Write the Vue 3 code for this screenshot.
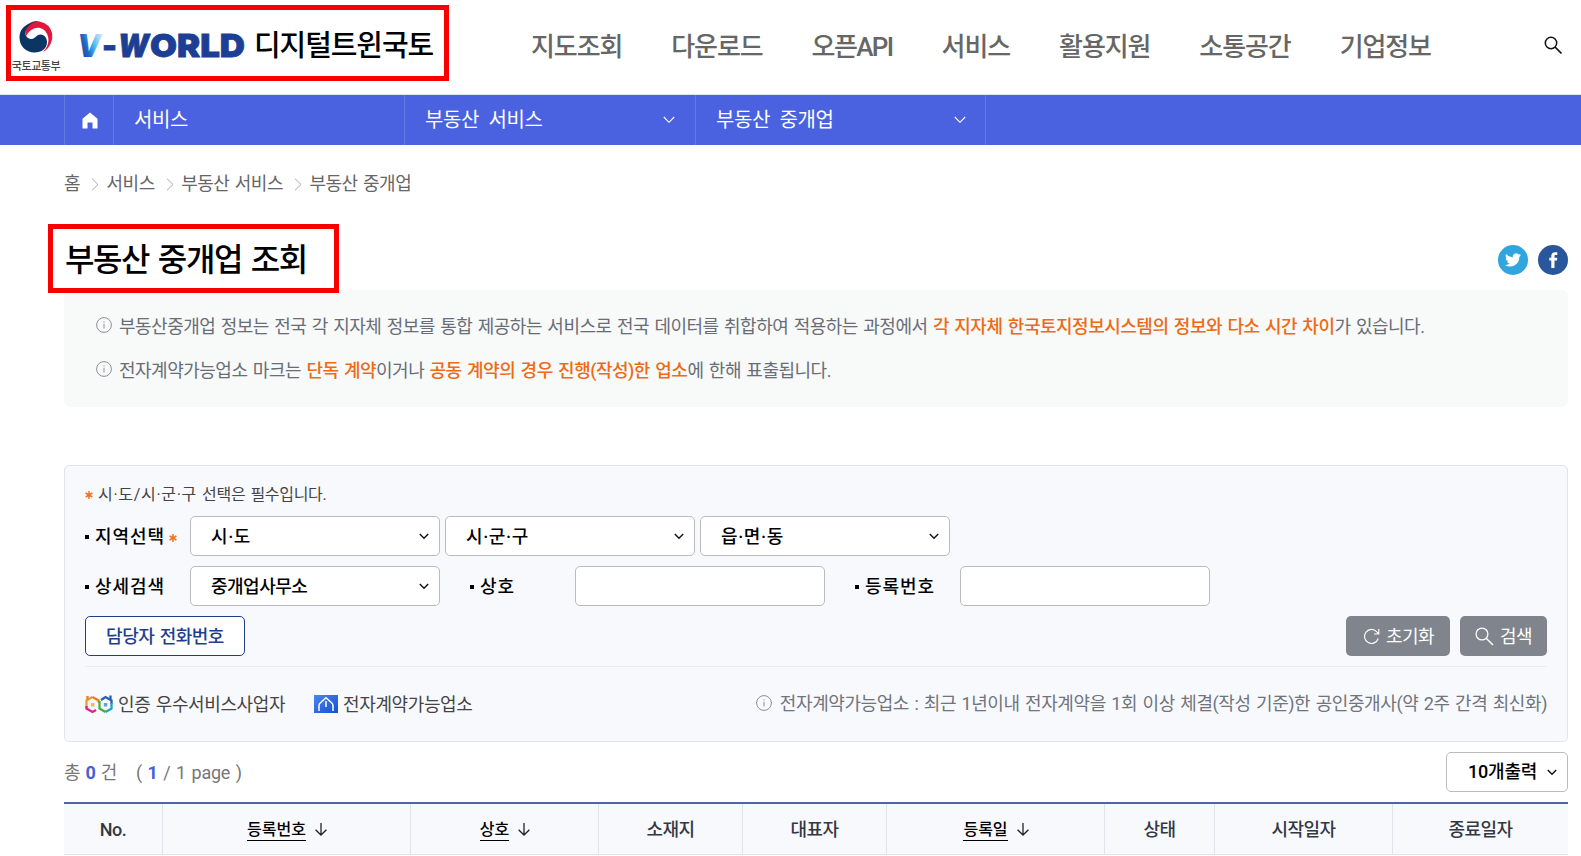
<template>
  <div class="page">
    <header class="header">
      <a class="logo">
        <span class="ministry">
          <svg width="34" height="34" viewBox="0 0 34 34">
            <path d="M6 7A15.5 15.5 0 0 1 33 13C34.500 21 30 29 24 32C29.500 26 30.500 20 28.500 15C26 8.500 20 6.500 15 8.500C11.500 10 9.500 12 7 16Z" fill="#e3173e" />
            <path d="M11 3.500C4 6 .5 11 .5 17.500C.5 26 7 32.500 15.500 32.500C22.500 32.500 28 28.500 28 22C28 17.500 25 14.500 21.500 14.500C17 14.500 16.500 19 12.500 19C9 19 6.500 16.500 6.500 13C6.500 8 10 5 14 3C16 2 19 1.500 21 1.500C17 .4 14 2 11 3.500Z" fill="#0b3563" />
          </svg>
          <em>국토교통부</em>
        </span>
        <svg class="wordmark" width="176" height="44" viewBox="0 0 176 44">
          <defs>
            <linearGradient id="vfill" x1="0" y1="0.7" x2="1" y2="0.2">
              <stop offset="0" stop-color="#1c3f95" />
              <stop offset="0.35" stop-color="#2166c6" />
              <stop offset="0.6" stop-color="#45bdf5" />
              <stop offset="0.8" stop-color="#a9d5fa" />
              <stop offset="1" stop-color="#eadcf5" />
            </linearGradient>
          </defs>
          <text class="wm slant v" x="3" y="32" textLength="24" lengthAdjust="spacingAndGlyphs">V</text>
          <text class="wm" x="28" y="32" textLength="15" lengthAdjust="spacingAndGlyphs">-</text>
          <text class="wm slant" x="44" y="32" textLength="31" lengthAdjust="spacingAndGlyphs">W</text>
          <text class="wm" x="76" y="32" textLength="95" lengthAdjust="spacingAndGlyphs">ORLD</text>
        </svg>
        <strong>디지털트윈국토</strong>
      </a>
      <nav class="gnb">
        <a v-for="item in gnb" :key="item">{{ item }}</a>
      </nav>
      <svg class="search" width="19" height="19" viewBox="0 0 19 19">
        <circle cx="7" cy="7" r="5.700" fill="none" stroke="#111" stroke-width="1.500" />
        <path d="M11 11L17.500 17.500" stroke="#111" stroke-width="1.700" />
      </svg>
      <i class="mark mark-logo"></i>
    </header>

    <div class="lnb">
      <a class="home">
        <svg width="16" height="17" viewBox="0 0 16 17">
          <path d="M8 .5L15.500 6.700V16.500H10.500V10.500H5.500V16.500H.5V6.700Z" fill="#fff" />
        </svg>
      </a>
      <a v-for="item in lnb" :key="item.label" class="depth">
        {{ item.label }}
        <svg v-if="item.open" width="12" height="8" viewBox="0 0 12 8">
          <path d="M.8 1L6 6.300L11.200 1" fill="none" stroke="#fff" stroke-width="1.100" />
        </svg>
      </a>
    </div>

    <main class="content">
      <div class="crumbs">
        <template v-for="(c, i) in crumbs" :key="c">
          <svg v-if="i" width="8" height="13" viewBox="0 0 8 13">
            <path d="M1 .7L7 6.500L1 12.300" fill="none" stroke="#aaa" stroke-width="1" />
          </svg>
          <span>{{ c }}</span>
        </template>
      </div>

      <div class="title-row">
        <h1>부동산 중개업 조회</h1>
        <div class="sns">
          <a class="tw">
            <svg width="16" height="14" viewBox="0 0 24 20">
              <path d="M24 2.400a9.800 9.800 0 0 1-2.800.8A4.900 4.900 0 0 0 23.300.5a9.900 9.900 0 0 1-3.100 1.200 4.900 4.900 0 0 0-8.400 4.500A14 14 0 0 1 1.700 1.100a4.900 4.900 0 0 0 1.500 6.500 4.900 4.900 0 0 1-2.200-.6v.1a4.900 4.900 0 0 0 3.900 4.800 5 5 0 0 1-2.200.1 4.900 4.900 0 0 0 4.600 3.400A9.900 9.900 0 0 1 0 17.500 14 14 0 0 0 21.500 5c1-.7 1.800-1.600 2.500-2.600z" fill="#fff" />
            </svg>
          </a>
          <a class="fb">
            <svg width="9" height="16" viewBox="0 0 9 16">
              <path d="M2.300 16V8.600H.3V5.800H2.300V4C2.300 1.500 3.600.2 6 .2H8.300V3H6.700C5.800 3 5.500 3.400 5.500 4.200V5.800H8.300L8 8.600H5.500V16Z" fill="#fff" />
            </svg>
          </a>
        </div>
        <i class="mark mark-title"></i>
      </div>

      <div class="notice">
        <p>
          <svg class="info" width="16" height="16" viewBox="0 0 16 16"><circle cx="8" cy="8" r="7.400" /><path d="M8 6.800V11.500M8 4.300V5.500" /></svg>
          <span>부동산중개업 정보는 전국 각 지자체 정보를 통합 제공하는 서비스로 전국 데이터를 취합하여 적용하는 과정에서 <b>각 지자체 한국토지정보시스템의 정보와 다소 시간 차이</b>가 있습니다.</span>
        </p>
        <p>
          <svg class="info" width="16" height="16" viewBox="0 0 16 16"><circle cx="8" cy="8" r="7.400" /><path d="M8 6.800V11.500M8 4.300V5.500" /></svg>
          <span>전자계약가능업소 마크는 <b>단독 계약</b>이거나 <b>공동 계약의 경우 진행(작성)한 업소</b>에 한해 표출됩니다.</span>
        </p>
      </div>

      <form class="filter" @submit.prevent>
        <p class="required">
          <svg class="star" width="8" height="8" viewBox="0 0 8 8"><path d="M4 0V8M.6 2L7.400 6M7.400 2L.6 6" /></svg>
          <span><span class="dotted">시·도/시·군·구</span> 선택은 필수입니다.</span>
        </p>
        <div class="row">
          <label class="first">
            지역선택
            <svg class="star" width="8" height="8" viewBox="0 0 8 8"><path d="M4 0V8M.6 2L7.400 6M7.400 2L.6 6" /></svg>
          </label>
          <span v-for="r in regions" :key="r" class="select region">
            <select><option>{{ r }}</option></select>
            <svg width="10" height="7" viewBox="0 0 10 7"><path d="M.8 1L5 5.300L9.200 1" /></svg>
          </span>
        </div>
        <div class="row">
          <label class="first">상세검색</label>
          <span class="select">
            <select><option>중개업사무소</option></select>
            <svg width="10" height="7" viewBox="0 0 10 7"><path d="M.8 1L5 5.300L9.200 1" /></svg>
          </span>
          <label class="next">상호</label>
          <input v-model="name" type="text" />
          <label class="next">등록번호</label>
          <input v-model="regNo" type="text" />
        </div>
        <div class="buttons">
          <button class="phone">담당자 전화번호</button>
          <button class="gray reset" @click="reset">
            <svg width="17" height="17" viewBox="0 0 17 17">
              <path d="M15.200 10.500A7 7 0 1 1 13.800 3.800L15.800 5.800M15.800 1V6H11" fill="none" stroke="#fff" stroke-width="1.100" />
            </svg>
            초기화
          </button>
          <button class="gray find">
            <svg width="19" height="19" viewBox="0 0 19 19">
              <circle cx="7" cy="7" r="5.900" fill="none" stroke="#fff" stroke-width="1.300" />
              <path d="M11.200 11.200L18 18" stroke="#fff" stroke-width="1.400" />
            </svg>
            검색
          </button>
        </div>
        <div class="legend">
          <svg width="28" height="19" viewBox="0 0 28 19" fill="none" stroke-width="2.300">
            <path d="M7.500 2L1.500 5.500V13" stroke="#f59a23" />
            <path d="M1.500 11V13.500L7.500 17L11 15" stroke="#e0218a" />
            <path d="M7.500 2L13.500 5.500V7.500M2.500 1V4.500" stroke="#f07c1f" />
            <path d="M20.500 17L14.500 13.500V6" stroke="#4caf3a" />
            <path d="M16 5L20.500 2L26.500 5.500V9M25.500 .5V4" stroke="#2b5fb4" />
            <path d="M26.500 8V13.500L20.500 17" stroke="#23a4c8" />
            <path d="M6 8H9.500V11.500H6Z" fill="#f7b65a" stroke="none" />
            <path d="M18.800 8H22.300V11.500H18.800Z" fill="#58a5dc" stroke="none" />
          </svg>
          <span class="cert">인증 우수서비스사업자</span>
          <svg width="24" height="18" viewBox="0 0 24 18">
            <defs>
              <linearGradient id="econ" x1="0" y1="0" x2="1" y2="1">
                <stop offset="0" stop-color="#4c86ec" />
                <stop offset="1" stop-color="#1551d0" />
              </linearGradient>
            </defs>
            <rect width="24" height="18" fill="url(#econ)" />
            <path d="M5 16V10.500Q5 9 6.500 7.700L12 2.800L17.500 7.700Q19 9 19 10.500V16M12 6V12" fill="none" stroke="#fff" stroke-width="1.500" />
          </svg>
          <span class="econtract">전자계약가능업소</span>
          <span class="guide">
            <svg class="info" width="16" height="16" viewBox="0 0 16 16"><circle cx="8" cy="8" r="7.400" /><path d="M8 6.800V11.500M8 4.300V5.500" /></svg>
            <span>전자계약가능업소 : 최근 1년이내 전자계약을 1회 이상 체결(작성 기준)한 공인중개사(약 2주 간격 최신화)</span>
          </span>
        </div>
      </form>

      <div class="result-bar">
        <p>총 <b>0</b> 건 <span class="pages">( <b>1</b> / 1 page )</span></p>
        <span class="select small">
          <select><option>10개출력</option></select>
          <svg width="10" height="7" viewBox="0 0 10 7"><path d="M.8 1L5 5.300L9.200 1" /></svg>
        </span>
      </div>

      <table class="list">
        <colgroup>
          <col v-for="c in columns" :key="c.label" :style="{ width: c.width + 'px' }" />
        </colgroup>
        <thead>
          <tr>
            <th v-for="c in columns" :key="c.label">
              <a v-if="c.sort">
                <u>{{ c.label }}</u>
                <svg width="12" height="13" viewBox="0 0 12 13"><path d="M6 0V12M.6 6.800L6 12L11.400 6.800" /></svg>
              </a>
              <template v-else>{{ c.label }}</template>
            </th>
          </tr>
        </thead>
      </table>
    </main>
  </div>
</template>

<script setup>
import { ref } from 'vue'

const gnb = ['지도조회', '다운로드', '오픈API', '서비스', '활용지원', '소통공간', '기업정보']
const lnb = [
  { label: '서비스', open: false },
  { label: '부동산 서비스', open: true },
  { label: '부동산 중개업', open: true },
]
const crumbs = ['홈', '서비스', '부동산 서비스', '부동산 중개업']
const regions = ['시·도', '시·군·구', '읍·면·동']
const columns = [
  { label: 'No.', width: 99 },
  { label: '등록번호', width: 248, sort: true },
  { label: '상호', width: 188, sort: true },
  { label: '소재지', width: 144 },
  { label: '대표자', width: 144 },
  { label: '등록일', width: 218, sort: true },
  { label: '상태', width: 110 },
  { label: '시작일자', width: 178 },
  { label: '종료일자', width: 175 },
]

const name = ref('')
const regNo = ref('')

function reset() {
  name.value = ''
  regNo.value = ''
}
</script>

<style>
body {
  margin: 0;
  background: #fff;
  overflow: hidden;
}
</style>

<style scoped>
.page {
  width: 1581px;
  height: 856px;
  overflow: hidden;
  font-family: Roboto, 'Noto Sans CJK KR', sans-serif;
  font-size: 18px;
  line-height: 24px;
  letter-spacing: -0.5px;
  word-spacing: 1.4px;
  color: #666;
}

.page *,
.page {
  box-sizing: border-box;
}

p,
h1 {
  margin: 0;
}

svg {
  display: block;
  flex: none;
}

.mark {
  position: absolute;
  border: 5px solid #f60000;
}

.header {
  position: relative;
  display: flex;
  align-items: center;
  height: 95px;
  border-bottom: 1px solid #dbe2f2;
}

.mark-logo {
  left: 6px;
  top: 5px;
  width: 443px;
  height: 76px;
}

.logo {
  display: flex;
  align-items: center;
  width: 531px;
  padding-left: 11px;
}

.ministry {
  display: flex;
  flex-direction: column;
  align-items: center;
  width: 50px;
  padding-bottom: 1px;
}

.ministry em {
  margin-top: 6px;
  font-style: normal;
  font-weight: 500;
  font-size: 11px;
  line-height: 14px;
  letter-spacing: -0.4px;
  color: #444;
}

.wordmark {
  margin-left: 13px;
}

.wm {
  font-family: Inter, sans-serif;
  font-size: 32px;
  font-weight: 900;
  letter-spacing: 0;
  fill: #1c3f95;
  stroke: #1c3f95;
  stroke-width: 0.8px;
}

.wm.slant {
  font-style: italic;
}

.wm.v {
  fill: url(#vfill);
  stroke: none;
}

.logo strong {
  margin-left: 4px;
  padding-bottom: 2px;
  font-size: 29px;
  font-weight: 500;
  line-height: 40px;
  letter-spacing: -1.1px;
  color: #000;
}

.gnb {
  display: flex;
  gap: 49px;
  font-size: 26px;
  font-weight: 500;
  line-height: 40px;
  letter-spacing: -1.1px;
}

.gnb a:nth-child(3) {
  letter-spacing: -1.600px;
}

.search {
  margin-left: auto;
  margin-right: 18px;
  margin-bottom: 3px;
}

.lnb {
  display: flex;
  height: 50px;
  padding-left: 64px;
  background: #4a62e0;
  color: #fff;
  font-size: 20px;
  letter-spacing: -0.4px;
  word-spacing: 5px;
}

.home {
  display: flex;
  align-items: center;
  justify-content: center;
  width: 50px;
  padding-left: 1px;
  border: solid #6279e6;
  border-width: 0 1px;
}

.depth {
  display: flex;
  align-items: center;
  justify-content: space-between;
  width: 291px;
  padding: 0 20px;
  border-right: 1px solid #6279e6;
}

.depth:last-child {
  width: 290px;
  padding-right: 19px;
}

.content {
  width: 1504px;
  margin-left: 64px;
}

.crumbs {
  display: flex;
  align-items: center;
  height: 24px;
  margin-top: 27px;
}

.crumbs svg {
  margin: 0 7.500px 0 11px;
}

.title-row {
  position: relative;
  display: flex;
  align-items: center;
  justify-content: space-between;
  height: 94px;
}

.title-row h1 {
  padding: 34px 0 0 1px;
  font-size: 32px;
  font-weight: 500;
  line-height: 40px;
  letter-spacing: -1.4px;
  word-spacing: 2.200px;
  color: #000;
}

.mark-title {
  left: -16px;
  top: 28px;
  width: 291px;
  height: 69px;
}

.sns {
  display: flex;
  gap: 10px;
  padding-top: 34px;
}

.sns a {
  display: flex;
  align-items: center;
  justify-content: center;
  width: 30px;
  height: 30px;
  border-radius: 50%;
}

.tw {
  background: #30a5de;
}

.fb {
  background: #2a569b;
}

.notice {
  height: 117px;
  padding: 15px 32px;
  border-radius: 6px;
  background: #f8f9f9;
  color: #686d76;
}

.notice p {
  display: flex;
  align-items: center;
  gap: 7px;
  height: 44px;
  white-space: nowrap;
}

.notice b {
  font-weight: 500;
  color: #ee6a14;
}

.info {
  fill: none;
  stroke: #8b8f96;
  stroke-width: 1;
}

.notice .info {
  margin-top: -4px;
}

.filter {
  height: 277px;
  margin-top: 58px;
  padding: 18px 20px 0;
  border: 1px solid #e1e4ed;
  border-radius: 5px;
  background: #f8f9fd;
}

.star {
  fill: none;
  stroke: #f07522;
  stroke-width: 1.500;
}

.required {
  display: flex;
  align-items: center;
  gap: 5px;
  height: 22px;
  margin-bottom: 10px;
  font-size: 16px;
  letter-spacing: -0.3px;
  color: #444;
}

.dotted {
  letter-spacing: 0.7px;
}

.row {
  display: flex;
  height: 40px;
  margin-bottom: 10px;
}

label {
  display: flex;
  align-items: center;
  padding-top: 1px;
  font-weight: 500;
  letter-spacing: 0.9px;
  color: #000;
}

label::before {
  content: '';
  width: 4px;
  height: 4px;
  margin-right: 6px;
  background: #000;
}

label .star {
  margin: 3px 0 0 4px;
}

.first {
  width: 105px;
}

.next {
  width: 135px;
  padding-left: 30px;
}

.select {
  position: relative;
  width: 250px;
  height: 40px;
}

.select + .select {
  margin-left: 5px;
}

.select select {
  width: 100%;
  height: 100%;
  padding: 2px 20px 0;
  appearance: none;
  border: 1px solid #bbb;
  border-radius: 5px;
  background: #fff;
  font: inherit;
  font-weight: 500;
  letter-spacing: -0.5px;
  color: #000;
}

.select.region select {
  letter-spacing: 0.6px;
}

.select svg {
  position: absolute;
  right: 11px;
  top: 17px;
  fill: none;
  stroke: #111;
  stroke-width: 1.400;
}

input {
  width: 250px;
  height: 40px;
  border: 1px solid #bbb;
  border-radius: 5px;
  background: #fff;
}

.buttons {
  display: flex;
  gap: 10px;
  height: 51px;
  border-bottom: 1px solid #e9ebf1;
}

button {
  display: flex;
  align-items: center;
  justify-content: center;
  height: 40px;
  padding: 2px 0 0;
  border: 0;
  border-radius: 5px;
  font: inherit;
  letter-spacing: -0.5px;
  word-spacing: 1.4px;
}

.phone {
  width: 160px;
  border: 1px solid #1f3f8c;
  background: #fff;
  color: #1f3f8c;
  font-weight: 500;
}

.gray {
  gap: 6px;
  background: #80848d;
  color: #fff;
}

.gray svg {
  margin-top: -2px;
}

.reset {
  width: 104px;
  margin-left: auto;
  padding-left: 1px;
}

.find {
  width: 87px;
}

.legend {
  display: flex;
  align-items: center;
  height: 74px;
  color: #444;
}

.cert,
.econtract {
  padding-top: 2px;
  letter-spacing: -0.4px;
}

.cert {
  margin: 0 29px 0 5px;
}

.econtract {
  margin-left: 5px;
}

.guide {
  display: flex;
  align-items: center;
  gap: 8px;
  margin-left: auto;
  letter-spacing: -0.42px;
  color: #70747c;
}

.guide .info {
  margin-top: -3px;
}

.result-bar {
  display: flex;
  align-items: center;
  justify-content: space-between;
  height: 60px;
  color: #777;
}

.result-bar p {
  padding-top: 2px;
}

.result-bar b {
  font-weight: 700;
  color: #4a5fd5;
}

.pages {
  margin-left: 14px;
  letter-spacing: -0.25px;
}

.select.small {
  width: 122px;
}

.select.small select {
  padding: 0 0 0 21px;
  letter-spacing: -0.2px;
}

.list {
  width: 1504px;
  table-layout: fixed;
  border-collapse: separate;
  border-spacing: 0;
  border-top: 2px solid #4a69a0;
  background: #f8f9fd;
}

.list th {
  height: 51px;
  padding: 2px 0 0;
  border-right: 1px solid #e1e4ed;
  border-bottom: 1px solid #e1e4ed;
  font-weight: 500;
  color: #333842;
}

.list th:last-child {
  border-right: 0;
}

.list a {
  display: flex;
  align-items: center;
  justify-content: center;
  gap: 9px;
  padding-left: 1px;
  color: #000;
}

.list u {
  border-bottom: 1px solid #000;
  font-size: 16px;
  line-height: 20px;
  letter-spacing: 0;
  text-decoration: none;
}

.list svg {
  margin-top: -2px;
  fill: none;
  stroke: #222;
  stroke-width: 1.300;
}
</style>
